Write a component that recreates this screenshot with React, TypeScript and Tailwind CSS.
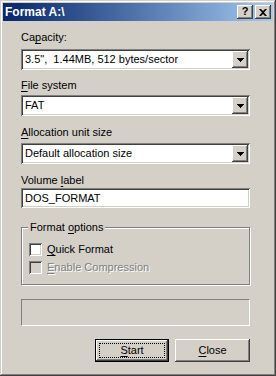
const FONT = "font-['Liberation_Sans',Arial,sans-serif]";

const raised =
  'bg-[#d4d0c8] shadow-[inset_-1px_-1px_0_#404040,inset_1px_1px_0_#fff,inset_-2px_-2px_0_#808080,inset_2px_2px_0_#d4d0c8]';
const sunken =
  'shadow-[inset_1px_1px_0_#808080,inset_-1px_-1px_0_#fff,inset_2px_2px_0_#404040,inset_-2px_-2px_0_#d4d0c8]';

function Key({ children }: { children: string }) {
  return <span className="underline underline-offset-[2px] decoration-1">{children}</span>;
}

function Combo({ value }: { value: string }) {
  return (
    <div className={`h-[21px] bg-white ${sunken} flex items-center p-[2px]`}>
      <span className="flex-1 pl-[2px] leading-[17px] whitespace-pre">{value}</span>
      <div className={`w-[16px] h-[17px] ${raised} flex items-center justify-center`}>
        <svg width="7" height="4" viewBox="0 0 7 4">
          <path d="M0 0h7v1H6v1H5v1H4v1H3V3H2V2H1V1H0z" fill="#000" />
        </svg>
      </div>
    </div>
  );
}

function Check({ label, disabled }: { label: React.ReactNode; disabled?: boolean }) {
  return (
    <div className="flex items-center h-[13px]">
      <div className={`w-[13px] h-[13px] ${disabled ? 'bg-[#d4d0c8]' : 'bg-white'} ${sunken}`} />
      <span
        className={`ml-[5px] leading-[13px] ${disabled ? 'text-[#808080] [text-shadow:1px_1px_0_#fff]' : 'text-black'}`}
      >
        {label}
      </span>
    </div>
  );
}

export default function App() {
  return (
    <div
      className={`w-[276px] h-[376px] bg-[#d4d0c8] text-[11px] text-black ${FONT} flex flex-col shadow-[inset_-1px_-1px_0_#404040,inset_1px_1px_0_#d4d0c8,inset_-2px_-2px_0_#808080,inset_2px_2px_0_#fff]`}
    >
      {/* caption */}
      <div className="mx-[3px] mt-[3px] h-[18px] bg-gradient-to-r from-[#0a246a] to-[#a6caf0] flex items-center pl-[2px] pr-[2px]">
        <span className="flex-1 text-white font-bold text-[12px] leading-[18px]">Format A:\</span>
        <div className={`w-[16px] h-[14px] ${raised} flex items-center justify-center`}>
          <span className="font-bold text-[11px] leading-[11px] mt-[-1px]">?</span>
        </div>
        <div className={`w-[16px] h-[14px] ml-[2px] ${raised} flex items-center justify-center`}>
          <svg width="8" height="7" viewBox="0 0 8 7">
            <path d="M0 0h2l2 2 2-2h2L5 3.5 8 7H6L4 5 2 7H0l3-3.5z" fill="#000" />
          </svg>
        </div>
      </div>

      <div className="ml-[21px] w-[229px] flex flex-col">
        <div className="mt-[10px] leading-[13px]">
          Ca<Key>p</Key>acity:
        </div>
        <div className="mt-[5px]">
          <Combo value={'3.5",  1.44MB, 512 bytes/sector'} />
        </div>

        <div className="mt-[9px] leading-[13px]">
          <Key>F</Key>ile system
        </div>
        <div className="mt-[3px]">
          <Combo value="FAT" />
        </div>

        <div className="mt-[10px] leading-[13px]">
          <Key>A</Key>llocation unit size
        </div>
        <div className="mt-[4px]">
          <Combo value="Default allocation size" />
        </div>

        <div className="mt-[10px] leading-[13px]">
          Volume <Key>l</Key>abel
        </div>
        <div className={`mt-[1px] h-[20px] bg-white ${sunken} flex items-center px-[4px]`}>
          <span className="leading-[16px]">DOS_FORMAT</span>
        </div>

        {/* group box */}
        <div className="mt-[19px] relative h-[58px] border border-[#808080] shadow-[inset_1px_1px_0_#fff,1px_1px_0_#fff] flex flex-col gap-[5px] pl-[7px] pt-[15px]">
          <span className="absolute left-[6px] top-[-7px] px-[2px] bg-[#d4d0c8] leading-[13px]">
            Format <Key>o</Key>ptions
          </span>
          <Check
            label={
              <>
                <Key>Q</Key>uick Format
              </>
            }
          />
          <Check
            disabled
            label={
              <>
                <Key>E</Key>nable Compression
              </>
            }
          />
        </div>

        {/* progress */}
        <div className="mt-[14px] h-[27px] border-t border-l border-[#808080] border-r border-b border-r-white border-b-white" />

        <div className="mt-[13px] flex justify-end gap-[6px]">
          <div className="w-[74px] h-[23px] border border-black p-0">
            <div
              className={`h-full w-full bg-[#d4d0c8] shadow-[inset_-1px_-1px_0_#404040,inset_1px_1px_0_#fff,inset_-2px_-2px_0_#808080] flex items-center justify-center p-[3px]`}
            >
              <div className="w-full h-full border border-dotted border-black flex items-center justify-center leading-[13px]">
                <Key>S</Key>tart
              </div>
            </div>
          </div>
          <div className={`w-[75px] h-[23px] ${raised} flex items-center justify-center leading-[13px]`}>
            <Key>C</Key>lose
          </div>
        </div>
      </div>
    </div>
  );
}
